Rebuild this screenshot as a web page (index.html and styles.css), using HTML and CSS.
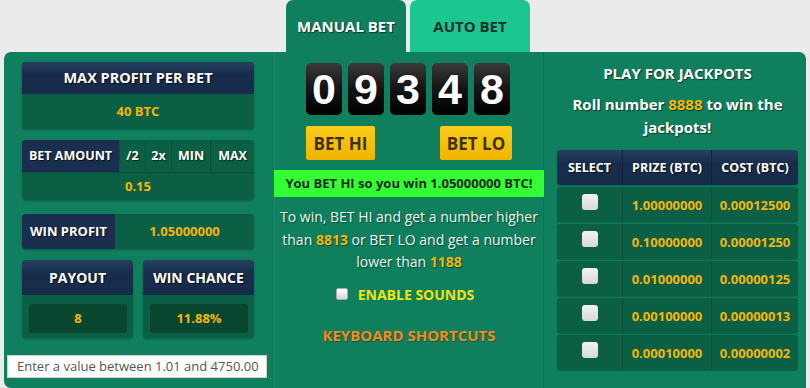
FILE: index.html
```html
<!DOCTYPE html>
<html>
<head>
    <title>Dice game</title>
    <link rel="stylesheet" href="styles.css">
</head>
<body>
    <div class="tabs">
        <div class="tab tab-active">MANUAL BET</div>
        <div class="tab tab-auto">AUTO BET</div>
    </div>

    <div class="panel">
        <div class="col col-left">
            <div class="box">
                <div class="box-head">MAX PROFIT PER BET</div>
                <div class="box-value">40 BTC</div>
            </div>

            <div class="box bet-box">
                <div class="bet-row">
                    <div class="bet-label">BET AMOUNT</div>
                    <div class="bet-btn">/2</div>
                    <div class="bet-btn">2x</div>
                    <div class="bet-btn">MIN</div>
                    <div class="bet-btn">MAX</div>
                </div>
                <div class="box-value bet-value">0.15</div>
            </div>

            <div class="box profit-box">
                <div class="profit-label">WIN PROFIT</div>
                <div class="profit-value">1.05000000</div>
            </div>

            <div class="pair">
                <div class="box small-box">
                    <div class="box-head small-head">PAYOUT</div>
                    <div class="small-body"><div class="small-value">8</div></div>
                </div>
                <div class="box small-box">
                    <div class="box-head small-head">WIN CHANCE</div>
                    <div class="small-body"><div class="small-value">11.88%</div></div>
                </div>
            </div>

            <div class="tooltip">Enter a value between 1.01 and 4750.00</div>
        </div>

        <div class="col col-center">
            <div class="digits">
                <div class="digit">0</div>
                <div class="digit">9</div>
                <div class="digit">3</div>
                <div class="digit">4</div>
                <div class="digit">8</div>
            </div>
            <div class="bet-buttons">
                <button class="hilo hi">BET HI</button>
                <button class="hilo lo">BET LO</button>
            </div>
            <div class="result">You BET HI so you win 1.05000000 BTC!</div>
            <p class="rules">To win, BET HI and get a number higher<br>than <b>8813</b> or BET LO and get a number<br>lower than <b>1188</b></p>
            <label class="sounds"><span class="check"></span>ENABLE SOUNDS</label>
            <div class="shortcuts">KEYBOARD SHORTCUTS</div>
        </div>

        <div class="col col-right">
            <h2>PLAY FOR JACKPOTS</h2>
            <p class="roll">Roll number <span>8888</span> to win the<br>jackpots!</p>
            <div class="jackpots">
                <div class="jp-row jp-head">
                    <div>SELECT</div>
                    <div>PRIZE (BTC)</div>
                    <div>COST (BTC)</div>
                </div>
                <div class="jp-row">
                    <div><span class="check big"></span></div>
                    <div>1.00000000</div>
                    <div>0.00012500</div>
                </div>
                <div class="jp-row">
                    <div><span class="check big"></span></div>
                    <div>0.10000000</div>
                    <div>0.00001250</div>
                </div>
                <div class="jp-row">
                    <div><span class="check big"></span></div>
                    <div>0.01000000</div>
                    <div>0.00000125</div>
                </div>
                <div class="jp-row">
                    <div><span class="check big"></span></div>
                    <div>0.00100000</div>
                    <div>0.00000013</div>
                </div>
                <div class="jp-row">
                    <div><span class="check big"></span></div>
                    <div>0.00010000</div>
                    <div>0.00000002</div>
                </div>
            </div>
        </div>
    </div>
</body>
</html>
```

FILE: styles.css
```css
body {
    margin: 0;
    background-color: #ebebeb;
    font-family: "Open Sans", "DejaVu Sans", sans-serif;
    font-weight: bold;
    overflow: hidden;
}

.tabs {
    display: flex;
    gap: 4px;
    height: 52px;
    padding-left: 286px;
}

.tab {
    width: 120px;
    border-radius: 7px 7px 0 0;
    text-align: center;
    font-size: 15px;
    line-height: 52px;
}

.tab-active {
    background-color: #0f7f5e;
    color: #fff;
    text-shadow: 1px 1px 1px rgba(0, 0, 0, 0.6);
}

.tab-auto {
    background-color: #1cc690;
    color: #17312a;
}

.panel {
    display: grid;
    grid-template-columns: 270px 270px 262px;
    margin-left: 4px;
    width: 802px;
    height: 336px;
    background-color: #0f7f5e;
    border-radius: 7px 7px 0 7px;
}

.col {
    box-sizing: border-box;
}

.col-center {
    border-left: 1px solid #16896a;
    border-right: 1px solid #0c7455;
    text-align: center;
}

/* left column */
.col-left {
    padding: 10px 20px 0 18px;
}

.box {
    border-radius: 4px;
    overflow: hidden;
    background-color: #0b5f44;
    box-shadow: 0 1px 2px rgba(0, 0, 0, 0.25);
}

.box-head {
    height: 32px;
    line-height: 32px;
    text-align: center;
    color: #fff;
    font-size: 14.5px;
    background: linear-gradient(#25405f, #182c4c 40%, #172b4b);
    text-shadow: 1px 1px 1px rgba(0, 0, 0, 0.7);
}

.box-value {
    height: 35px;
    line-height: 35px;
    text-align: center;
    color: #f6b50c;
    font-size: 13px;
}

.bet-box {
    margin-top: 11px;
}

.bet-row {
    display: flex;
    height: 32px;
    line-height: 32px;
    font-size: 12.5px;
    color: #fff;
    text-shadow: 1px 1px 1px rgba(0, 0, 0, 0.6);
}

.bet-label {
    width: 97px;
    text-align: center;
    background-color: #1a2f4f;
}

.bet-btn {
    text-align: center;
    background-color: #0b5f44;
    border-left: 1px solid #0a5138;
    flex: 1;
}

.bet-btn:nth-child(2),
.bet-btn:nth-child(3) {
    flex: 0 0 25px;
}

.bet-btn:nth-child(4) {
    flex: 0 0 38px;
}

.bet-value {
    height: 27px;
    line-height: 27px;
    border-top: 1px solid #0a5138;
}

.profit-box {
    display: flex;
    margin-top: 14px;
    height: 35px;
    line-height: 35px;
    font-size: 13px;
}

.profit-label {
    width: 93px;
    text-align: center;
    color: #fff;
    background-color: #1a2f4f;
    text-shadow: 1px 1px 1px rgba(0, 0, 0, 0.6);
}

.profit-value {
    flex: 1;
    text-align: center;
    color: #f6b50c;
}

.pair {
    display: flex;
    gap: 10px;
    margin-top: 11px;
}

.small-box {
    flex: 1;
}

.small-head {
    height: 35px;
    line-height: 35px;
    font-size: 14px;
}

.small-body {
    height: 43px;
    padding: 9px 6px 0 7px;
    box-sizing: border-box;
}

.small-value {
    height: 29px;
    line-height: 29px;
    text-align: center;
    color: #f6b50c;
    font-size: 13px;
    background-color: #08462f;
    border-radius: 3px;
}

.tooltip {
    margin: 17px 0 0 -15px;
    width: 260px;
    height: 23px;
    box-sizing: border-box;
    background-color: #fff;
    border: 1px solid #cfcfcf;
    color: #555;
    font-weight: normal;
    font-size: 13px;
    line-height: 21px;
    padding-left: 9px;
    white-space: nowrap;
}

/* center column */
.digits {
    display: flex;
    justify-content: center;
    gap: 6px;
    margin-top: 11px;
    padding-right: 2px;
}

.digit {
    width: 36px;
    height: 52px;
    border-radius: 5px;
    background: linear-gradient(#3a3a3a, #141414 50%, #000);
    color: #fff;
    font-family: "Liberation Sans", Arial, sans-serif;
    font-size: 43px;
    line-height: 52px;
    text-shadow: 0 0 2px rgba(0, 0, 0, 0.8);
}

.bet-buttons {
    display: flex;
    justify-content: space-between;
    width: 206px;
    margin: 11px 0 0 31px;
}

.hilo {
    height: 34px;
    border: none;
    border-radius: 2px;
    background: linear-gradient(#f9cc1a, #f0b400);
    color: #3f3000;
    font-family: inherit;
    font-weight: bold;
    font-size: 17px;
    padding: 0;
}

.hi {
    width: 69px;
}

.lo {
    width: 72px;
}

.result {
    margin: 10px -1px 0;
    height: 27px;
    line-height: 27px;
    background-color: #33ff33;
    color: #1c2a1c;
    font-size: 13px;
}

.rules {
    margin: 9px -4px 0;
    color: #eef3ef;
    font-weight: normal;
    font-size: 14px;
    line-height: 22.5px;
    white-space: nowrap;
    text-shadow: 1px 1px 1px rgba(0, 0, 0, 0.4);
}

.rules b {
    color: #f6b50c;
}

.sounds {
    display: flex;
    justify-content: center;
    align-items: center;
    gap: 10px;
    margin-top: 11px;
    color: #f2e40a;
    font-size: 14px;
    padding-right: 8px;
}

.check {
    display: inline-block;
    width: 12px;
    height: 12px;
    background: linear-gradient(#fff, #d6d6d6);
    border: 1px solid #aaa;
    border-radius: 2px;
    box-sizing: border-box;
}

.shortcuts {
    margin-top: 21px;
    color: #f38b1e;
    font-size: 15px;
    text-shadow: 1px 1px 1px rgba(0, 0, 0, 0.3);
}

/* right column */
.col-right {
    padding: 10px 8px 0 13px;
    text-align: center;
    color: #fff;
}

.col-right h2 {
    margin: 0;
    font-size: 15px;
    line-height: 22px;
    text-shadow: 1px 1px 1px rgba(0, 0, 0, 0.5);
}

.roll {
    margin: 9px 0 0;
    font-size: 15px;
    line-height: 23px;
    white-space: nowrap;
    text-shadow: 1px 1px 1px rgba(0, 0, 0, 0.5);
}

.roll span {
    color: #f6b50c;
}

.jackpots {
    display: flex;
    flex-direction: column;
    gap: 2px;
    margin-top: 11px;
}

.jp-row {
    display: grid;
    grid-template-columns: 65px 89px 1fr;
    height: 35px;
    border-radius: 3px;
    overflow: hidden;
    background-color: #0b5f44;
    color: #f6b50c;
    font-size: 13px;
    box-shadow: 0 1px 1px rgba(0, 0, 0, 0.2);
}

.jp-row div {
    display: flex;
    align-items: center;
    justify-content: center;
}

.jp-row div + div {
    border-left: 1px solid #0a5339;
}

.jp-head {
    background: linear-gradient(#25405f, #182c4c 40%, #172b4b);
    color: #fff;
    font-size: 12.5px;
    text-shadow: 1px 1px 1px rgba(0, 0, 0, 0.6);
}

.jp-head div + div {
    border-left: 1px solid #10223c;
}

.check.big {
    width: 16px;
    height: 16px;
    border: none;
    border-radius: 3px;
    background: linear-gradient(#f2f2f2, #d8d8d8);
    margin-top: -6px;
}
```
